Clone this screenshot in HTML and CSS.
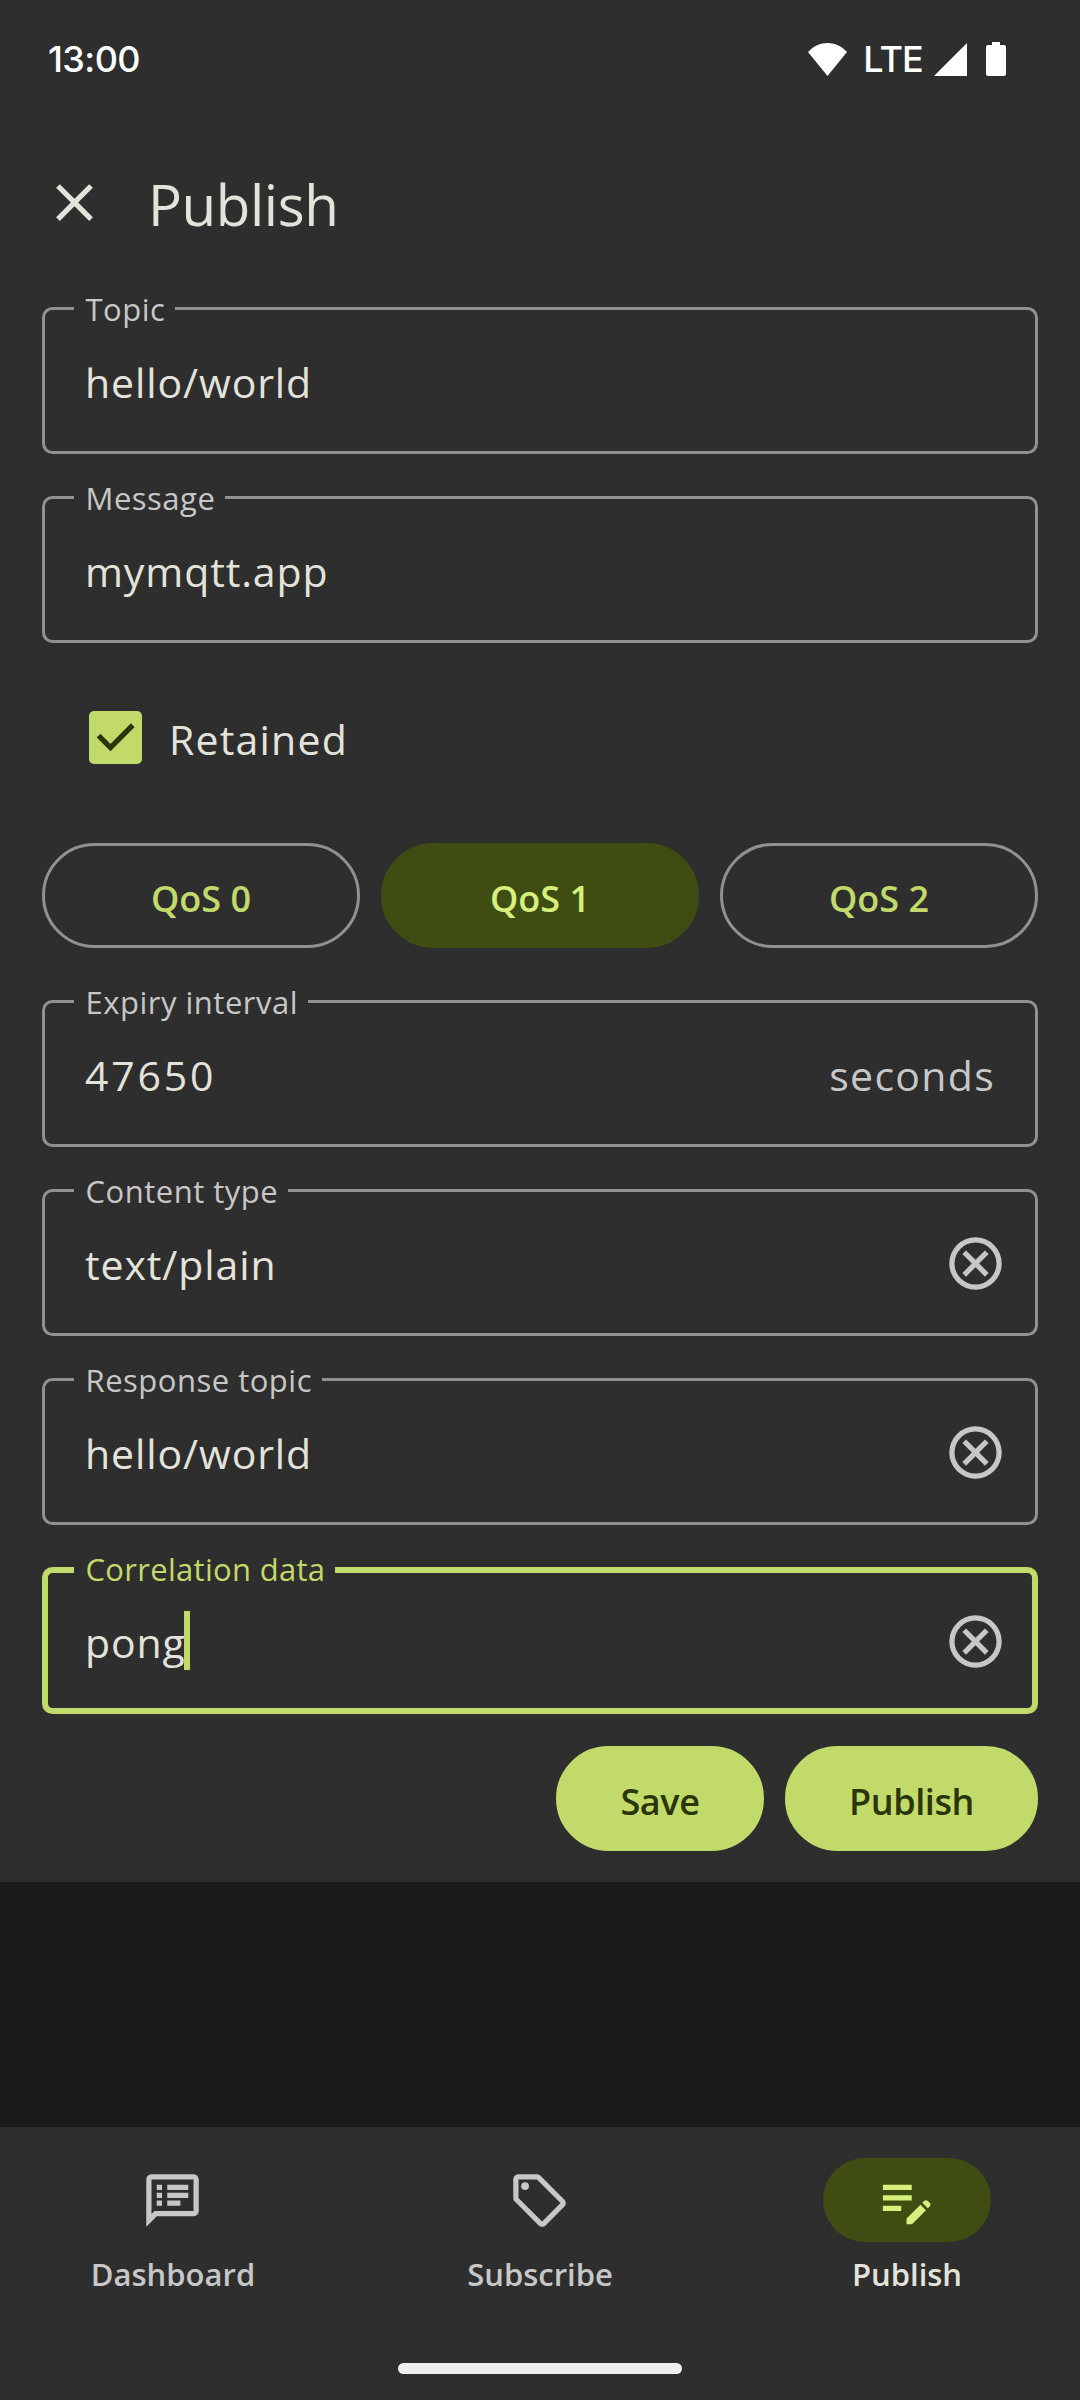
FILE: index.html
```html
<!DOCTYPE html>
<html lang="en">
<head>
    <meta charset="UTF-8">
    <title>Publish</title>
    <link rel="stylesheet" href="styles.css">
</head>
<body>

<main class="sheet">
    <div class="status-bar">
        <span class="clock">13:00</span>
        <svg class="wifi" viewBox="0 0 39 33"><path d="M0 9C11-3 28-3 39 9L19.5 33z"/></svg>
        <span class="network">LTE</span>
        <svg class="signal" viewBox="0 0 33 33"><path d="M33 0v33H0z"/></svg>
        <svg class="battery" viewBox="0 0 20 34"><path d="M6 0h8v3h4a2 2 0 0 1 2 2v27a2 2 0 0 1-2 2H2a2 2 0 0 1-2-2V5a2 2 0 0 1 2-2h4z"/></svg>
    </div>

    <header class="header">
        <svg class="icon" viewBox="0 0 24 24"><path d="M19 6.41 17.59 5 12 10.59 6.41 5 5 6.41 10.59 12 5 17.59 6.41 19 12 13.41 17.59 19 19 17.59 13.41 12z"/></svg>
        <h1>Publish</h1>
    </header>

    <fieldset class="field">
        <legend>Topic</legend>
        <div class="row"><span class="value">hello/world</span></div>
    </fieldset>
    <fieldset class="field">
        <legend>Message</legend>
        <div class="row"><span class="value">mymqtt.app</span></div>
    </fieldset>

    <div class="retained">
        <svg class="checkbox" viewBox="0 0 53 53">
            <rect width="53" height="53" rx="5"/>
            <path d="M9.5 24.7 21.5 36.5 43.8 14.2"/>
        </svg>
        <span>Retained</span>
    </div>

    <div class="qos">
        <div class="pill">QoS 0</div>
        <div class="pill selected">QoS 1</div>
        <div class="pill">QoS 2</div>
    </div>

    <fieldset class="field">
        <legend>Expiry interval</legend>
        <div class="row"><span class="value digits">47650</span><span class="suffix">seconds</span></div>
    </fieldset>
    <fieldset class="field">
        <legend>Content type</legend>
        <div class="row">
            <span class="value">text/plain</span>
            <svg class="icon clear" viewBox="0 0 24 24"><path d="m8.4 17 3.6-3.6 3.6 3.6 1.4-1.4-3.6-3.6L17 8.4 15.6 7 12 10.6 8.4 7 7 8.4l3.6 3.6L7 15.6zM12 2a10 10 0 1 0 0 20 10 10 0 0 0 0-20zm0 18a8 8 0 1 1 0-16 8 8 0 0 1 0 16z"/></svg>
        </div>
    </fieldset>
    <fieldset class="field">
        <legend>Response topic</legend>
        <div class="row">
            <span class="value">hello/world</span>
            <svg class="icon clear" viewBox="0 0 24 24"><path d="m8.4 17 3.6-3.6 3.6 3.6 1.4-1.4-3.6-3.6L17 8.4 15.6 7 12 10.6 8.4 7 7 8.4l3.6 3.6L7 15.6zM12 2a10 10 0 1 0 0 20 10 10 0 0 0 0-20zm0 18a8 8 0 1 1 0-16 8 8 0 0 1 0 16z"/></svg>
        </div>
    </fieldset>
    <fieldset class="field focused">
        <legend>Correlation data</legend>
        <div class="row">
            <span class="value">pong</span><i class="caret"></i>
            <svg class="icon clear" viewBox="0 0 24 24"><path d="m8.4 17 3.6-3.6 3.6 3.6 1.4-1.4-3.6-3.6L17 8.4 15.6 7 12 10.6 8.4 7 7 8.4l3.6 3.6L7 15.6zM12 2a10 10 0 1 0 0 20 10 10 0 0 0 0-20zm0 18a8 8 0 1 1 0-16 8 8 0 0 1 0 16z"/></svg>
        </div>
    </fieldset>

    <div class="actions">
        <div class="pill filled save">Save</div>
        <div class="pill filled publish">Publish</div>
    </div>
</main>

<nav class="nav">
    <div class="tabs">
        <div class="tab">
            <div class="indicator">
                <svg class="icon" viewBox="0 0 24 24"><path d="M20 2H4c-1.1 0-1.99.9-1.99 2L2 22l4-4h14c1.1 0 2-.9 2-2V4c0-1.1-.9-2-2-2zm0 14H5.17L4 17.17V4h16v12zM6 12h2v2H6zm0-3h2v2H6zm0-3h2v2H6zm4 6h5v2h-5zm0-3h8v2h-8zm0-3h8v2h-8z"/></svg>
            </div>
            <span>Dashboard</span>
        </div>
        <div class="tab">
            <div class="indicator">
                <svg class="icon" viewBox="0 0 24 24"><path d="m21.41 11.58-9-9C12.05 2.22 11.55 2 11 2H4c-1.1 0-2 .9-2 2v7c0 .55.22 1.05.59 1.42l9 9c.36.36.86.58 1.41.58s1.05-.22 1.41-.59l7-7c.37-.36.59-.86.59-1.41s-.23-1.06-.59-1.42zM13 20.01 4 11V4h7v-.01l9 9-7 7.02z"/><circle cx="6.5" cy="6.5" r="1.5"/></svg>
            </div>
            <span>Subscribe</span>
        </div>
        <div class="tab active">
            <div class="indicator">
                <svg class="icon" viewBox="0 0 24 24"><path d="M3 10h11v2H3v-2zm0-2h11V6H3v2zm0 8h7v-2H3v2zm15.01-3.13.71-.71c.39-.39 1.02-.39 1.41 0l.71.71c.39.39.39 1.02 0 1.41l-.71.71-2.12-2.12zm-.71.71-5.3 5.3V21h2.12l5.3-5.3-2.12-2.12z"/></svg>
            </div>
            <span>Publish</span>
        </div>
    </div>
    <div class="home-bar"></div>
</nav>

</body>
</html>
```

FILE: styles.css
```css
* {
    box-sizing: border-box;
}

body {
    margin: 0;
    height: 2400px;
    display: flex;
    flex-direction: column;
    justify-content: space-between;
    background: #1b1b1b;
    color: #e4e3db;
    font-family: "Open Sans", "Noto Sans", sans-serif;
    font-size: 41px;
    overflow: hidden;
}

svg {
    display: block;
    flex: none;
    fill: currentColor;
}

.icon {
    width: 63px;
    height: 63px;
}

.sheet {
    height: 1882px;
    padding: 0 42px;
    background: #2e2e2e;
}

/* status bar */
.status-bar {
    display: flex;
    height: 118px;
    padding: 0 32px 0 6px;
    align-items: center;
    color: #fff;
    font-family: Inter, sans-serif;
    font-size: 36px;
    font-weight: 500;
}

.clock {
    margin-right: auto;
    letter-spacing: -0.6px;
}

.wifi {
    width: 39px;
    height: 33px;
}

.network {
    margin: 0 11px 0 16px;
    letter-spacing: -0.8px;
}

.signal {
    width: 33px;
    height: 33px;
    margin-right: 19px;
}

.battery {
    width: 20px;
    height: 34px;
}

/* header */
.header {
    display: flex;
    align-items: center;
    height: 170px;
    padding: 0 0 2px 1px;
}

h1 {
    margin: 4px 0 0 42px;
    font-size: 56.5px;
    font-weight: 400;
    letter-spacing: -0.4px;
}

/* outlined text fields */
.field {
    min-width: 0;
    height: 166px;
    margin: 0 0 23px;
    padding: 0 28px 0 29px;
    border: 3px solid #919191;
    border-radius: 10.5px;
}

legend {
    padding: 1px 9.5px 0 11.5px;
    color: #c7c7c7;
    font-size: 31px;
    line-height: 40px;
    letter-spacing: 0.5px;
}

.row {
    display: flex;
    align-items: center;
    height: 106px;
    padding-left: 11px;
}

.value {
    letter-spacing: 0.9px;
}

.digits {
    letter-spacing: 2.8px;
}

.suffix {
    margin-left: auto;
    margin-right: 12px;
    color: #c7c7c7;
    letter-spacing: 1.3px;
}

.clear {
    margin: -2px 0 0 auto;
    color: #c7c7c7;
}

.focused {
    height: 165px;
    margin: 24px 0 0;
    padding: 0 25px 0 26px;
    border: 6px solid #c2da69;
}

.focused legend {
    padding-top: 0;
    padding-bottom: 2px;
    color: #c2da69;
    letter-spacing: 0.3px;
}

.focused .row {
    height: 102px;
}

.caret {
    width: 6px;
    height: 59px;
    margin: -4px 0 0 -2px;
    background: #c2da69;
}

/* retained */
.retained {
    display: flex;
    align-items: center;
    gap: 27px;
    height: 143px;
    padding-left: 47px;
    letter-spacing: 1.2px;
}

.retained span {
    padding-top: 2px;
}

.checkbox {
    width: 53px;
    height: 53px;
}

.checkbox rect {
    fill: #c2da69;
}

.checkbox path {
    fill: none;
    stroke: #2a350a;
    stroke-width: 5.25;
}

/* buttons */
.pill {
    display: flex;
    align-items: center;
    justify-content: center;
    height: 105px;
    padding-top: 6px;
    border: 3px solid #919191;
    border-radius: 53px;
    color: #c2da69;
    font-size: 36px;
    font-weight: 600;
}

.qos {
    display: grid;
    grid-template-columns: repeat(3, 1fr);
    gap: 21px;
    margin: 34px 0 33px;
}

.selected {
    border-color: #3f4c12;
    background: #3f4c12;
    color: #d5f07b;
}

.actions {
    display: flex;
    justify-content: flex-end;
    gap: 21px;
    margin-top: 32px;
}

.filled {
    border-color: #c2da69;
    background: #c2da69;
    color: #2a350a;
    letter-spacing: -0.4px;
}

.save {
    width: 208px;
}

.publish {
    width: 253px;
}

/* bottom navigation */
.nav {
    height: 273px;
    padding-top: 31px;
    background: #2e2e2e;
}

.tabs {
    display: grid;
    grid-template-columns: repeat(3, 1fr);
    gap: 21px;
}

.tab {
    display: flex;
    flex-direction: column;
    align-items: center;
    gap: 11px;
    color: #c7c7c7;
    font-size: 31px;
    font-weight: 600;
    line-height: 42px;
}

.tab .icon {
    margin-right: 2px;
}

.indicator {
    display: flex;
    align-items: center;
    justify-content: center;
    width: 168px;
    height: 84px;
    border-radius: 42px;
}

.active {
    color: #e4e3db;
}

.active .indicator {
    background: #3f4c12;
    color: #d5f07b;
}

.home-bar {
    width: 284px;
    height: 11px;
    margin: 68px auto 0;
    border-radius: 6px;
    background: #eee;
}
```
